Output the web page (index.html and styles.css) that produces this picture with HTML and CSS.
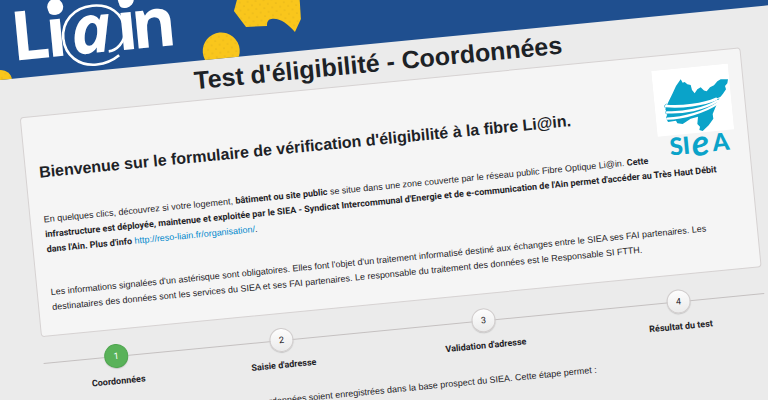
FILE: index.html
```html
<!DOCTYPE html>
<html lang="fr">
<head>
    <meta charset="utf-8">
    <title>Test d'éligibilité - Coordonnées</title>
    <meta name="viewport" content="width=device-width, initial-scale=1">
    <link rel="stylesheet" href="styles.css">
</head>
<body>
    <div class="sheet">
        <header class="banner">
            <svg class="banner-art" width="320" height="100" viewBox="0 0 320 100" role="img" aria-label="Li@in">
                <defs>
                    <pattern id="dots" width="8" height="8" patternUnits="userSpaceOnUse">
                        <rect width="8" height="8" fill="#f9c61c"/>
                        <circle cx="2" cy="2" r=".6" fill="#d3a41c"/>
                        <circle cx="6" cy="6" r=".6" fill="#d3a41c"/>
                    </pattern>
                </defs>
                <g fill="url(#dots)">
                    <circle cx="1" cy="101" r="11"/>
                    <circle cx="223" cy="92.5" r="18.5"/>
                    <path d="M243 36 L244 42 L239.5 54 L250 71 L271 72 C271 68 273 65.500 276 65.500 C284 65 291 71 298.200 80.800 L305.400 68.400 L306.500 36 Z"/>
                </g>
                <g class="brand" fill="#fff">
                    <text x="15" y="82">L</text>
                    <text x="50" y="82">i</text>
                    <text x="121" y="82">i</text>
                    <text x="136" y="82">n</text>
                    <text class="brand-a" x="75" y="82">a</text>
                    <circle cx="62" cy="32.500" r="8"/>
                    <circle cx="133" cy="32" r="8"/>
                    <path d="M111 82 C118 82 129 75 129 62 C129 45 116 35 99 35 C80 35 67 48 67 65 C67 82 80 94 98 94 C107 94 115 91 121 87" fill="none" stroke="#fff" stroke-width="2.600"/>
                </g>
            </svg>
        </header>

        <main class="content">
            <h1>Test d'éligibilité - Coordonnées</h1>

            <section class="intro">
                <svg class="siea" width="77" height="91" viewBox="0 0 77 91" role="img" aria-label="SIEA">
                    <rect width="77" height="66" fill="#fff"/>
                    <g transform="matrix(.3318 .0322 -.0322 .3318 -9.1 -22)">
                        <path fill="#0aa3c9" d="M122 88 L128 98 L134 96 L142 103 L152 105 L156 120 L164 130 L172 118 L182 112 L192 122 L200 124 L210 112 L222 106 L232 94 L242 88 L264 88 L262 100 L255 108 L258 118 L250 130 L236 148 L228 168 L218 192 L220 206 L206 226 L188 243 L178 240 L180 230 L172 222 L174 200 L152 206 L128 222 L112 220 L108 212 L84 216 L78 204 L82 192 L76 178 L84 158 L98 130 L108 108 Z"/>
                        <g fill="none" stroke="#fff" stroke-linecap="round">
                            <path stroke-width="8" d="M78 168 C125 172 190 164 228 147"/>
                            <path stroke-width="7" d="M80 187 C130 190 192 177 232 153"/>
                            <path stroke-width="7" d="M82 206 C128 205 195 187 236 158"/>
                            <path stroke-width="3" d="M225 149 L252 138 M228 155 L254 144"/>
                        </g>
                        <path fill="none" stroke="#0aa3c9" stroke-width="2" d="M80 162 C70 166 72 174 82 176 M82 180 C74 185 76 193 84 194"/>
                    </g>
                    <g class="siea-name" fill="#0aa3c9">
                        <text x="11" y="86">S</text>
                        <text x="24" y="86">I</text>
                        <text class="siea-e" x="33" y="89">e</text>
                        <text x="54" y="86">A</text>
                    </g>
                </svg>

                <h2>Bienvenue sur le formulaire de vérification d'éligibilité à la fibre Li@in.</h2>
                <p>
                    En quelques clics, découvrez si votre logement, <strong>bâtiment ou site public</strong> se situe dans une zone couverte par le réseau public Fibre Optique Li@in. <strong>Cette<br>
                    infrastructure est déployée, maintenue et exploitée par le SIEA - Syndicat Intercommunal d'Energie et de e-communication de l'Ain permet d'accéder au Très Haut Débit<br>
                    dans l'Ain. Plus d'info</strong> <a href="http://reso-liain.fr/organisation/">http://reso-liain.fr/organisation/</a>.
                </p>
                <p>
                    Les informations signalées d'un astérisque sont obligatoires. Elles font l'objet d'un traitement informatisé destiné aux échanges entre le SIEA ses FAI partenaires. Les<br>
                    destinataires des données sont les services du SIEA et ses FAI partenaires. Le responsable du traitement des données est le Responsable SI FTTH.
                </p>
            </section>

            <ol class="steps">
                <li class="active"><span class="number">1</span>Coordonnées</li>
                <li><span class="number">2</span>Saisie d'adresse</li>
                <li><span class="number">3</span>Validation d'adresse</li>
                <li><span class="number">4</span>Résultat du test</li>
            </ol>

            <p class="note">Afin de poursuivre le test, il est nécessaire que vos coordonnées soient enregistrées dans la base prospect du SIEA. Cette étape permet :</p>
        </main>
    </div>
</body>
</html>
```

FILE: styles.css
```css
body {
    margin: 0;
    min-height: 100vh;
    overflow: hidden;
    background: #ebebeb;
    color: #1d2226;
    font-family: "Liberation Sans", Arial, sans-serif;
    font-size: 9px;
    line-height: 15px;
}
.sheet {
    margin-top: -20px;
    transform: rotate(-5.55deg);
    transform-origin: 0 100px;
}
.banner {
    height: 100px;
    margin: 0 -40px;
    padding: 0 40px;
    background: #1f4f8f;
}
.banner-art {
    display: block;
}
.brand {
    font-family: "Open Sans", sans-serif;
    font-size: 68px;
    font-weight: bold;
}
.brand-a {
    font-style: italic;
}
.content {
    padding: 0 28px 0 16px;
}
h1 {
    margin: 0;
    font-size: 25px;
    line-height: 39px;
    text-align: center;
}
.intro {
    padding: 14px 13px 20px;
    background: #f5f5f5;
    border: 1px solid #d6d2d2;
    border-radius: 4px;
}
.siea {
    float: right;
}
.siea-name {
    font-family: Lato, sans-serif;
    font-size: 24px;
    font-weight: 900;
}
.siea-e {
    font-size: 36px;
    font-style: italic;
    font-weight: bold;
}
h2 {
    margin: 0;
    padding: 30px 0 28px;
    font-size: 16px;
    line-height: 24px;
}
.intro p {
    margin: 0 0 28px;
}
.intro p:last-child {
    margin: 0;
}
strong,
.steps {
    font-family: Roboto, sans-serif;
    font-weight: bold;
}
a {
    color: #0088cc;
    text-decoration: none;
}
.steps {
    display: grid;
    grid-template-columns: 146fr 186fr 220fr 172fr;
    margin: 14px 0 20px;
    padding: 0;
    list-style: none;
    text-align: center;
    background: linear-gradient(#c4c0c0, #c4c0c0) 0 12px / 100% 1px no-repeat;
}
.number {
    display: block;
    box-sizing: border-box;
    width: 24px;
    height: 24px;
    margin: 0 auto 6px;
    border: 1px solid #d0cccc;
    border-radius: 50%;
    background: linear-gradient(#fdfdfd, #ebebeb);
    box-shadow: 0 1px 1px #c8c8c8;
    font-weight: normal;
    line-height: 22px;
}
.active .number {
    background: #59b259;
    border-color: #4fa64f;
    color: #fff;
}
.note {
    margin: 0;
    padding-left: 1px;
}
```
